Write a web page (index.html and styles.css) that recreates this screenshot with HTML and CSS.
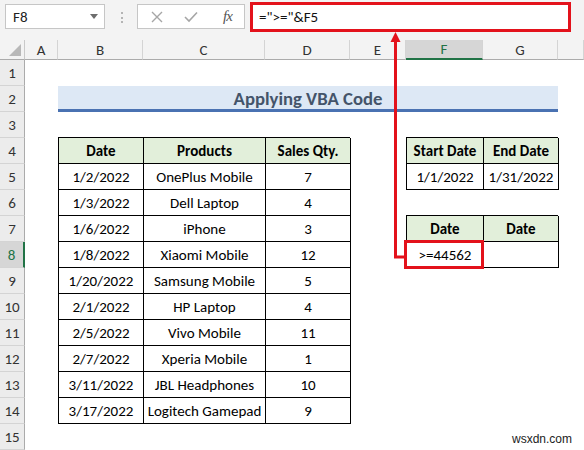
FILE: index.html
```html
<!DOCTYPE html>
<html>
<head>
<meta charset="utf-8">
<link rel="stylesheet" href="styles.css">
</head>
<body>
<div class="app">
  <div class="toolbar">
    <div class="namebox"><span class="name">F8</span><span class="caret"></span></div>
    <div class="grip"></div>
    <div class="fxbox">
      <svg class="ico" width="12" height="12" viewBox="0 0 12 12"><path d="M1 1 L11 11 M11 1 L1 11" stroke="#a6a6a6" stroke-width="1.4" fill="none"/></svg>
      <svg class="ico" width="14" height="12" viewBox="0 0 14 12"><path d="M1 6 L5 10 L13 1.5" stroke="#a6a6a6" stroke-width="1.6" fill="none"/></svg>
      <span class="fx">fx</span>
    </div>
    <div class="formula">="&gt;="&amp;F5</div>
  </div>

  <div class="sheet">
    <div class="corner"><span class="tri"></span></div>
    <div class="colhead">A</div>
    <div class="colhead">B</div>
    <div class="colhead">C</div>
    <div class="colhead">D</div>
    <div class="colhead">E</div>
    <div class="colhead active">F</div>
    <div class="colhead">G</div>
    <div class="colhead"></div>

    <div class="rowheads">
      <div class="rowhead">1</div>
      <div class="rowhead">2</div>
      <div class="rowhead">3</div>
      <div class="rowhead">4</div>
      <div class="rowhead">5</div>
      <div class="rowhead">6</div>
      <div class="rowhead">7</div>
      <div class="rowhead active">8</div>
      <div class="rowhead">9</div>
      <div class="rowhead">10</div>
      <div class="rowhead">11</div>
      <div class="rowhead">12</div>
      <div class="rowhead">13</div>
      <div class="rowhead">14</div>
      <div class="rowhead">15</div>
    </div>

    <div class="title">Applying VBA Code</div>

    <div class="tbl main">
      <div class="c h">Date</div><div class="c h">Products</div><div class="c h">Sales Qty.</div>
      <div class="c">1/2/2022</div><div class="c">OnePlus Mobile</div><div class="c">7</div>
      <div class="c">1/3/2022</div><div class="c">Dell Laptop</div><div class="c">4</div>
      <div class="c">1/6/2022</div><div class="c">iPhone</div><div class="c">3</div>
      <div class="c">1/8/2022</div><div class="c">Xiaomi Mobile</div><div class="c">12</div>
      <div class="c">1/20/2022</div><div class="c">Samsung Mobile</div><div class="c">5</div>
      <div class="c">2/1/2022</div><div class="c">HP Laptop</div><div class="c">4</div>
      <div class="c">2/5/2022</div><div class="c">Vivo Mobile</div><div class="c">11</div>
      <div class="c">2/7/2022</div><div class="c">Xperia Mobile</div><div class="c">1</div>
      <div class="c">3/11/2022</div><div class="c">JBL Headphones</div><div class="c">10</div>
      <div class="c">3/17/2022</div><div class="c">Logitech Gamepad</div><div class="c">9</div>
    </div>

    <div class="tbl range">
      <div class="c h">Start Date</div><div class="c h">End Date</div>
      <div class="c">1/1/2022</div><div class="c">1/31/2022</div>
    </div>

    <div class="tbl crit">
      <div class="c h">Date</div><div class="c h">Date</div>
      <div class="c sel">&gt;=44562</div><div class="c"></div>
    </div>
  </div>

  <svg class="arrow" width="584" height="450" viewBox="0 0 584 450">
    <path d="M405 257 H395.5 V40" stroke="#e3121b" stroke-width="3" fill="none"/>
    <polygon points="395.5,32 390.5,42 400.5,42" fill="#e3121b"/>
  </svg>
  <div class="watermark">wsxdn.com</div>
</div>
</body>
</html>
```

FILE: styles.css
```css
* { box-sizing: border-box; }
html, body { margin: 0; padding: 0; background: #fff; }
body { font-family: Carlito, Lato, "Noto Sans", sans-serif; color: #000; }

.app { position: relative; width: 584px; height: 450px; overflow: hidden; }

.toolbar {
  height: 40px;
  background: #f3f3f3;
  display: flex;
  align-items: flex-start;
}
.namebox {
  margin: 4px 0 0 5px;
  width: 100px;
  height: 25px;
  background: #fff;
  border: 1px solid #c6c6c6;
  display: flex;
  align-items: center;
  justify-content: space-between;
  padding: 0 6px 0 7px;
  font-size: 15px;
  color: #222;
}
.caret {
  width: 0; height: 0;
  border-left: 4px solid transparent;
  border-right: 4px solid transparent;
  border-top: 5px solid #6d6d6d;
}
.grip {
  margin: 12px 0 0 16px;
  width: 2px;
  height: 11px;
  border-left: 2px dotted #b4b4b4;
}
.fxbox {
  margin: 4px 0 0 14px;
  width: 108px;
  height: 25px;
  background: #fff;
  border: 1px solid #c6c6c6;
  display: flex;
  align-items: center;
  padding: 0 0 0 13px;
  gap: 0;
}
.fxbox .ico:nth-child(1) { margin-right: 21px; }
.fxbox .ico:nth-child(2) { margin-right: 25px; }
.fx {
  font-family: "Liberation Serif", serif;
  font-style: italic;
  font-size: 15px;
  color: #555;
  letter-spacing: -1px;
}
.formula {
  margin: 2px 0 0 5px;
  width: 321px;
  height: 30px;
  border: 3px solid #e3121b;
  background: #fff;
  font-size: 15px;
  padding: 3px 0 0 6px;
  color: #111;
}

.sheet {
  display: grid;
  grid-template-columns: 25px 33px 85px 122px 85px 56px 77px 75px 1fr;
  grid-template-rows: 20px repeat(15, 26px);
}
.corner {
  background: #f3f3f3;
  border-right: 1px solid #c9c9c9;
  border-bottom: 1px solid #ababab;
  position: relative;
}
.tri {
  position: absolute;
  right: 3px; bottom: 3px;
  width: 0; height: 0;
  border-left: 12px solid transparent;
  border-bottom: 12px solid #b8b8b8;
}
.colhead {
  background: #f3f3f3;
  border-right: 1px solid #d4d4d4;
  border-bottom: 1px solid #ababab;
  font-size: 15px;
  color: #333;
  display: flex;
  align-items: center;
  justify-content: center;
}
.colhead.active {
  background: #d6d6d6;
  color: #217346;
  border-bottom: 2px solid #217346;
}
.rowheads {
  grid-column: 1;
  grid-row: 2 / 17;
  display: flex;
  flex-direction: column;
}
.rowhead {
  height: 26px;
  flex: none;
  background: #ececec;
  border-right: 1px solid #ababab;
  border-bottom: 1px solid #d4d4d4;
  font-size: 15px;
  color: #333;
  display: flex;
  align-items: center;
  justify-content: center;
}
.rowhead.active {
  background: #d6d6d6;
  color: #217346;
  border-right: 2px solid #217346;
}

.title {
  grid-column: 3 / 9;
  grid-row: 3;
  background: #dde8f5;
  border-bottom: 3px solid #4a72b2;
  color: #44546a;
  font-weight: bold;
  font-size: 18.7px;
  display: flex;
  align-items: center;
  justify-content: center;
  padding-top: 1px;
}

.tbl {
  display: grid;
  grid-auto-rows: 26px;
  border-left: 1px solid #000;
  border-top: 1px solid #000;
  align-self: start;
  margin-top: -1px;
}
.main { grid-column: 3 / 6; grid-row: 5 / 16; grid-template-columns: 85px 122px 85px; }
.range { grid-column: 7 / 9; grid-row: 5 / 7; grid-template-columns: 77px 75px; }
.crit { grid-column: 7 / 9; grid-row: 8 / 10; grid-template-columns: 77px 75px; }

.c {
  border-right: 1px solid #000;
  border-bottom: 1px solid #000;
  font-size: 15px;
  display: flex;
  align-items: center;
  justify-content: center;
  white-space: nowrap;
  padding-top: 1px;
}
.c.h { background: #e2efda; font-weight: bold; }
.c.sel { position: relative; }
.c.sel::after {
  content: "";
  position: absolute;
  left: -3px; top: -2px; right: -1px; bottom: -2px;
  border: 3px solid #e3121b;
}

.arrow { position: absolute; left: 0; top: 0; pointer-events: none; }
.watermark {
  position: absolute;
  right: 12px;
  bottom: 4px;
  font-family: "Liberation Sans", sans-serif;
  font-size: 12px;
  color: #222;
}
```
